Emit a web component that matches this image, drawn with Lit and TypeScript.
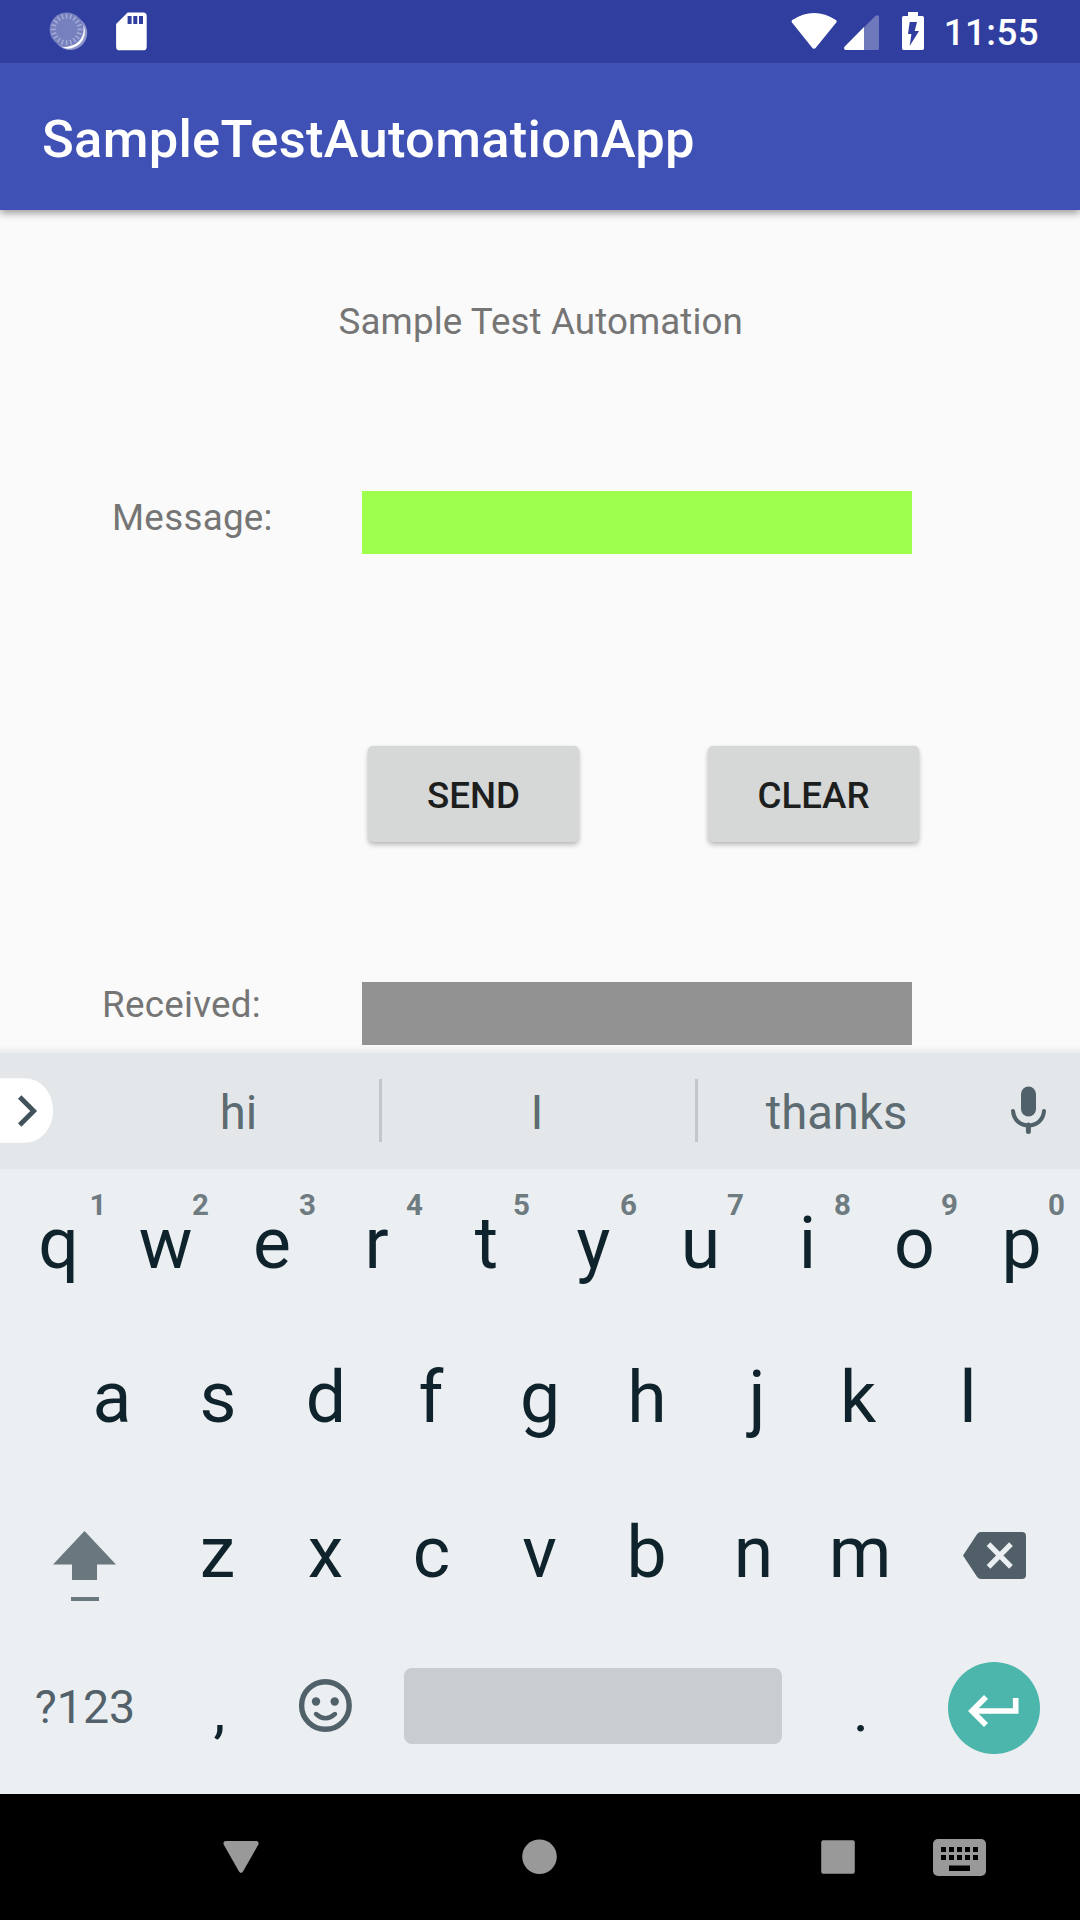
import { LitElement, html, css, svg } from "lit";
import { customElement, property } from "lit/decorators.js";
import { styleMap } from "lit/directives/style-map.js";

const spokes = Array.from({ length: 20 }, (_, i) => i * 18);

@customElement("status-bar")
class StatusBar extends LitElement {
  static styles = css`
    :host { display: flex; position: relative; z-index: 1; justify-content: space-between; height: 63px; background: #303f9f; color: #fff; }
    svg { display: block; }
    .clock { font: 500 36.75px/66px Roboto, sans-serif; letter-spacing: .4px; padding-right: 41px; }
    .group { display: flex; }
  `;
  render() {
    return html`
      <svg width="160" height="63" viewBox="0 0 160 63">
        <circle cx="70.2" cy="33" r="17" fill="#fff" fill-opacity=".45" />
        <path d="M83.8 25.5A17 17 0 0 1 62 47.6Q79 47 83.8 25.5Z" fill="#fff" />
        <circle cx="66.6" cy="29.4" r="17" fill="#7780bf" />
        <g stroke="#a5acd6" stroke-width="1.5">
          ${spokes.map((a) => svg`<path d="M66.6 13.6v5" transform="rotate(${a} 66.6 29.4)"/>`)}
        </g>
        <path fill="#fff" fill-rule="evenodd" d="M127.6 12.5H143a3.6 3.6 0 0 1 3.7 3.6v30.6a3.6 3.6 0 0 1-3.7 3.6H119.8a3.6 3.6 0 0 1-3.7-3.6V24ZM127.6 16v8h4v-8ZM133.3 16v8h4v-8ZM139 16v8h4v-8Z" />
      </svg>
      <div class="group">
        <svg width="156" height="63" viewBox="788 0 156 63">
          <path fill="#fff" d="M791.9 20.3Q814 5.700 836.3 20.300Q837 21.500 836.300 22.600L816 47.600Q814 50 812 47.600L792 22.600Q791.200 21.500 791.900 20.300Z" />
          <path fill="#fff" fill-opacity=".3" d="M864 27.300 875.600 15.700Q877.500 14.500 879 16.300V48.300Q879 50 877.300 50H864Z" />
          <path fill="#fff" d="M864 27V50H845.500Q843.300 49 844.500 46.700Z" />
          <path fill="#fff" fill-rule="evenodd" d="M908 12h10v4h4.300q1.700 0 1.700 1.700v30.600q0 1.700-1.700 1.700h-18.600q-1.700 0-1.700-1.700V17.700q0-1.700 1.700-1.700H908ZM909.700 22 908 34h3.400L909.700 46 919 31h-4.300L917 22Z" />
        </svg>
        <div class="clock">11:55</div>
      </div>`;
  }
}

@customElement("message-form")
class MessageForm extends LitElement {
  static styles = css`
    :host { display: flex; flex-direction: column; height: 843px; background: #fafafa; color: #757575; font: 36.75px Roboto, sans-serif; }
    .heading { margin-top: 87px; line-height: 49px; text-align: center; padding-left: 1.500px; letter-spacing: .09px; }
    .row { display: flex; height: 63px; }
    .message { margin-top: 145px; }
    .received { margin-top: 140px; }
    .label { box-sizing: border-box; width: 362px; letter-spacing: .28px; }
    .message .label { padding-left: 112px; line-height: 53px; }
    .received .label { padding-left: 102px; line-height: 45px; }
    .field { width: 550px; background: #9eff4d; }
    .output { background: #929292; }
    .buttons { display: flex; gap: 129px; margin-top: 192px; padding-left: 368px; }
    .button { width: 211px; height: 96px; border: 0; padding: 0; border-radius: 5px; background: #d6d7d7; color: #1d1e1e; font: 500 36.75px/99px Roboto, sans-serif; box-shadow: 0 3px 5px rgba(0, 0, 0, .24), 0 0 3px rgba(0, 0, 0, .06); }
  `;
  render() {
    return html`
      <div class="heading">Sample Test Automation</div>
      <div class="row message"><div class="label">Message:</div><div class="field"></div></div>
      <div class="buttons">
        <button class="button">SEND</button>
        <button class="button">CLEAR</button>
      </div>
      <div class="row received"><div class="label">Received:</div><div class="field output"></div></div>`;
  }
}

// Optical centring of narrow or lopsided letters, in pixels.
const nudges: Record<string, number> = { r: -3, f: -2, j: 3, k: -3, z: -1, s: -1, c: -1, e: -0.5, m: -0.5 };

@customElement("letter-key")
class LetterKey extends LitElement {
  @property() letter = "";
  @property() hint = "";
  static styles = css`
    :host { display: block; position: relative; width: 107px; text-align: center; font: 71.500px/149px Roboto, sans-serif; color: #0f232c; }
    .hint { position: absolute; top: 21px; right: 10px; font: 700 29.500px/30px Roboto, sans-serif; color: #6e7b81; }
    .one { right: 5.500px; }
  `;
  render() {
    const indent = { textIndent: `${(nudges[this.letter] ?? 0) * 2}px` };
    return html`<div style=${styleMap(indent)}>${this.letter}</div>
      ${this.hint ? html`<span class="hint ${this.hint === "1" ? "one" : ""}">${this.hint}</span>` : ""}`;
  }
}

@customElement("soft-keyboard")
class SoftKeyboard extends LitElement {
  static styles = css`
    :host { display: block; position: relative; height: 741px; background: #eceff1; font-family: Roboto, sans-serif; }
    svg { display: block; }
    .edge { position: absolute; left: 0; right: 0; top: -8px; height: 8px; background: linear-gradient(rgba(0, 0, 0, 0), rgba(0, 0, 0, .06)); }
    .strip { display: flex; align-items: center; height: 116px; background: #e3e7e9; color: #5d6b72; }
    .word { text-align: center; font-size: 47.250px; height: 116px; line-height: 120px; }
    .first { width: 281px; padding-left: 45px; }
    .second { width: 310px; padding-right: 3px; }
    .third { width: 277px; }
    .rule { width: 3px; height: 63px; margin-bottom: 1px; background: #c3c7ca; }
    .row { display: flex; height: 154px; padding: 0 5px; }
    .row.home { padding-left: 58.500px; height: 155px; }
    .row.bottom { height: 162px; }
    .symbols { width: 160px; text-align: center; font-size: 46.500px; line-height: 150px; color: #52616a; }
    .mark { width: 107px; text-align: center; font-size: 60px; line-height: 158px; color: #0f232c; }
    .comma { text-indent: 2px; }
    .space { width: 378px; height: 76px; margin: 36px 25.500px 0 25px; border-radius: 8px; background: #c9cdd0; }
  `;
  letters(keys: string, hints = "") {
    return [...keys].map((k, i) => html`<letter-key letter=${k} hint=${hints[i] ?? ""}></letter-key>`);
  }
  render() {
    return html`
      <div class="edge"></div>
      <div class="strip">
        <svg width="53" height="116" viewBox="0 1053 53 116">
          <path d="M0 1078.300H24.500C41 1078.300 53 1093 53 1110.600S41 1142.800 24.500 1142.800H0Z" fill="#fff" />
          <path d="M19.700 1097 33.700 1111 19.700 1125" fill="none" stroke="#42525b" stroke-width="4.800" />
        </svg>
        <div class="word first">hi</div>
        <div class="rule"></div>
        <div class="word second">I</div>
        <div class="rule"></div>
        <div class="word third">thanks</div>
        <svg width="105" height="116" viewBox="975 1053 105 116">
          <rect x="1021" y="1086.500" width="15" height="30" rx="7.500" fill="#51616a" />
          <path d="M1013 1111C1014.500 1130.300 1042.500 1130.300 1044 1111" fill="none" stroke="#51616a" stroke-width="4" stroke-linecap="round" />
          <path d="M1028.400 1125V1131.500" stroke="#51616a" stroke-width="5" stroke-linecap="round" />
        </svg>
      </div>
      <div class="row">${this.letters("qwertyuiop", "1234567890")}</div>
      <div class="row home">${this.letters("asdfghjkl")}</div>
      <div class="row">
        <svg width="160" height="154" viewBox="5 1478 160 154">
          <path fill="#69777e" d="M84.500 1531 116 1564.500H97V1580H72V1564.500H53ZM71 1597H99V1601H71Z" />
        </svg>
        ${this.letters("zxcvbnm")}
        <svg width="161" height="154" viewBox="914 1478 161 154">
          <path fill="#505f68" d="M981 1532H1022Q1026 1532 1026 1536V1575Q1026 1579 1022 1579H981Q978.500 1579 977 1576.700L963 1555.500 977 1534.300Q978.500 1532 981 1532Z" />
          <path d="M988.500 1544.200 1011 1566.800M1011 1544.200 988.500 1566.800" stroke="#eceff1" stroke-width="5.200" />
        </svg>
      </div>
      <div class="row bottom">
        <div class="symbols">?123</div>
        <div class="mark comma">,</div>
        <svg width="107" height="162" viewBox="272 1632 107 162">
          <circle cx="325.400" cy="1705.500" r="23.800" fill="none" stroke="#51616a" stroke-width="5.400" />
          <circle cx="316" cy="1701.500" r="4.200" fill="#51616a" />
          <circle cx="334.700" cy="1701.500" r="4.200" fill="#51616a" />
          <path d="M316 1714Q325.400 1722.500 335 1714" fill="none" stroke="#51616a" stroke-width="4.400" stroke-linecap="round" />
        </svg>
        <div class="space"></div>
        <div class="mark">.</div>
        <svg width="160" height="162" viewBox="915 1632 160 162">
          <circle cx="994" cy="1708" r="46" fill="#4db6ac" />
          <path d="M1015.700 1698V1711H971M986 1697 972 1711 986 1725" fill="none" stroke="#fff" stroke-width="5.600" />
        </svg>
      </div>`;
  }
}

@customElement("navigation-bar")
class NavigationBar extends LitElement {
  static styles = css`
    :host { display: block; height: 126px; background: #000; }
    svg { display: block; }
  `;
  render() {
    const cols = [941, 949, 957, 965, 973];
    return html`
      <svg width="1080" height="126" viewBox="0 1794 1080 126">
        <g fill="#999">
          <path d="M225.500 1841H256.600Q259.500 1841.500 258.300 1844.700L243 1871.500Q241 1874.300 239 1871.500L223.800 1844.700Q222.600 1841.500 225.500 1841Z" />
          <circle cx="539.500" cy="1856.700" r="17.300" />
          <rect x="821.200" y="1840.300" width="33.600" height="33.500" rx="2" />
          <rect x="933" y="1839" width="53" height="37" rx="5" />
        </g>
        ${cols.map((x) => svg`<path d="M${x} 1847h5v5h-5ZM${x} 1855h5v5h-5Z" />`)}
        <path d="M949 1865.500h21v5.500h-21Z" />
      </svg>`;
  }
}

@customElement("app-root")
class AppRoot extends LitElement {
  static styles = css`
    :host { display: flex; flex-direction: column; width: 1080px; height: 1920px; overflow: hidden; background: #fafafa; }
    .toolbar { position: relative; box-sizing: border-box; height: 147px; padding-left: 42px; background: #3f51b5; color: #fff; font: 500 52.500px/152px Roboto, sans-serif; letter-spacing: .27px; box-shadow: 0 3px 8px rgba(0, 0, 0, .4); }
  `;
  render() {
    return html`
      <status-bar></status-bar>
      <div class="toolbar">SampleTestAutomationApp</div>
      <message-form></message-form>
      <soft-keyboard></soft-keyboard>
      <navigation-bar></navigation-bar>`;
  }
}
